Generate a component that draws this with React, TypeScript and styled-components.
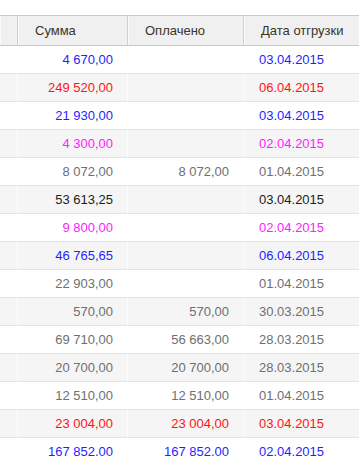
import React from "react";
import styled, { createGlobalStyle } from "styled-components";

const GlobalStyle = createGlobalStyle`
  html, body {
    margin: 0;
    padding: 0;
    background: #fff;
    overflow: hidden;
  }
  body {
    font-family: "Liberation Sans", Arial, sans-serif;
  }
`;

const Wrapper = styled.div`
  padding-top: 15px;
  width: 359px;
  height: 441px;
  overflow: hidden;
`;

const Table = styled.table`
  border-collapse: separate;
  border-spacing: 0;
  table-layout: fixed;
  width: 420px;
  font-size: 13px;
`;

const HeadCell = styled.th`
  height: 29px;
  padding: 0 0 0 17px;
  text-align: left;
  font-weight: normal;
  color: #3b3428;
  background: #f0f0f0;
  border-top: 1px solid #c8c8c8;
  border-bottom: 1px solid #c8c8c8;
  border-right: 1px solid #cfcfcf;
  box-shadow: inset 1px 0 0 #fafafa;
  white-space: nowrap;
  overflow: hidden;
`;

const Row = styled.tr<{ $shaded: boolean }>`
  background: ${(p) => (p.$shaded ? "#f5f5f5" : "#fff")};

  td {
    border-right-color: ${(p) => (p.$shaded ? "#fcfcfc" : "#fff")};
  }
`;

const Cell = styled.td<{ $align?: "left" | "right"; $color: string }>`
  height: 27px;
  padding: ${(p) => (p.$align === "left" ? "0 0 0 15px" : "0 14px 0 0")};
  text-align: ${(p) => p.$align ?? "right"};
  color: ${(p) => p.$color};
  border-bottom: 1px solid #e3e3e3;
  border-right: 1px solid #fff;
  white-space: nowrap;
  overflow: hidden;
`;

const colors = {
  blue: "#1f1fff",
  red: "#ff1414",
  pink: "#ff22ff",
  gray: "#6f6f6f",
  black: "#1c1c1c",
};

type Order = {
  sum: string;
  paid: string;
  date: string;
  tone: keyof typeof colors;
};

const orders: Order[] = [
  { sum: "4 670,00", paid: "", date: "03.04.2015", tone: "blue" },
  { sum: "249 520,00", paid: "", date: "06.04.2015", tone: "red" },
  { sum: "21 930,00", paid: "", date: "03.04.2015", tone: "blue" },
  { sum: "4 300,00", paid: "", date: "02.04.2015", tone: "pink" },
  { sum: "8 072,00", paid: "8 072,00", date: "01.04.2015", tone: "gray" },
  { sum: "53 613,25", paid: "", date: "03.04.2015", tone: "black" },
  { sum: "9 800,00", paid: "", date: "02.04.2015", tone: "pink" },
  { sum: "46 765,65", paid: "", date: "06.04.2015", tone: "blue" },
  { sum: "22 903,00", paid: "", date: "01.04.2015", tone: "gray" },
  { sum: "570,00", paid: "570,00", date: "30.03.2015", tone: "gray" },
  { sum: "69 710,00", paid: "56 663,00", date: "28.03.2015", tone: "gray" },
  { sum: "20 700,00", paid: "20 700,00", date: "28.03.2015", tone: "gray" },
  { sum: "12 510,00", paid: "12 510,00", date: "01.04.2015", tone: "gray" },
  { sum: "23 004,00", paid: "23 004,00", date: "03.04.2015", tone: "red" },
  { sum: "167 852,00", paid: "167 852,00", date: "02.04.2015", tone: "blue" },
];

export default function App() {
  return (
    <>
      <GlobalStyle />
      <Wrapper>
        <Table>
          <colgroup>
            <col style={{ width: 18 }} />
            <col style={{ width: 110 }} />
            <col style={{ width: 116 }} />
            <col style={{ width: 176 }} />
          </colgroup>
          <thead>
            <tr>
              <HeadCell />
              <HeadCell>Сумма</HeadCell>
              <HeadCell>Оплачено</HeadCell>
              <HeadCell>Дата отгрузки</HeadCell>
            </tr>
          </thead>
          <tbody>
            {orders.map((o, i) => (
              <Row key={i} $shaded={i % 2 === 1}>
                <Cell $color={colors[o.tone]} />
                <Cell $color={colors[o.tone]}>{o.sum}</Cell>
                <Cell $color={colors[o.tone]}>{o.paid}</Cell>
                <Cell $align="left" $color={colors[o.tone]}>
                  {o.date}
                </Cell>
              </Row>
            ))}
          </tbody>
        </Table>
      </Wrapper>
    </>
  );
}
